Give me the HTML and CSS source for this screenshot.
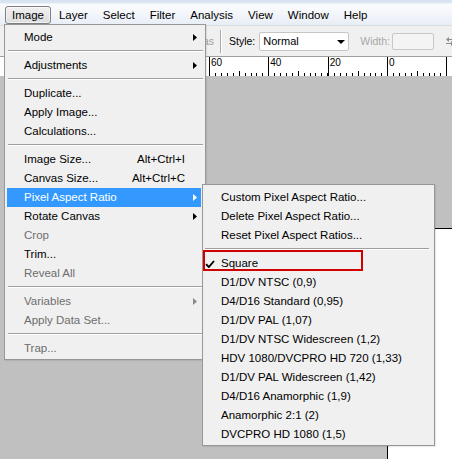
FILE: index.html
```html
<!DOCTYPE html>
<html>
<head>
<meta charset="utf-8">
<link rel="stylesheet" href="styles.css">
</head>
<body>
<div class="app">
  <div class="menubar">
    <span class="mb-item active">Image</span>
    <span class="mb-item">Layer</span>
    <span class="mb-item">Select</span>
    <span class="mb-item">Filter</span>
    <span class="mb-item">Analysis</span>
    <span class="mb-item">View</span>
    <span class="mb-item">Window</span>
    <span class="mb-item">Help</span>
  </div>
  <div class="toolbar">
    <div class="tb-left">Anti-alias</div>
    <div class="tb-sep"></div>
    <span class="tb-label">Style:</span>
    <div class="tb-select">Normal<svg class="dd" width="8" height="4" viewBox="0 0 8 4"><path d="M0 0H8L4 4Z" fill="#000"/></svg></div>
    <span class="tb-label dim">Width:</span>
    <div class="tb-input"></div>
    <svg class="tb-icon" width="8" height="9" viewBox="0 0 8 9"><path d="M0 2.5L3 0V5Z M8 6.5L5 4V9Z" fill="#8a8a8a"/><path d="M3 2.5H8M0 6.5H5" stroke="#8a8a8a"/></svg>
  </div>
  <div class="ruler">
    <div class="seg"></div>
    <div class="seg"></div>
    <div class="seg"></div>
    <div class="seg">60</div>
    <div class="seg">40</div>
    <div class="seg">20</div>
    <div class="seg">0</div>
    <div class="seg"></div>
  </div>
  <div class="workspace">
    <div class="canvas"></div>
  </div>

  <div class="menu main-menu">
    <div class="item"><span>Mode</span><svg class="arrow" width="4" height="7" viewBox="0 0 4 7"><path d="M0 0L4 3.5L0 7Z"/></svg></div>
    <div class="sep"></div>
    <div class="item"><span>Adjustments</span><svg class="arrow" width="4" height="7" viewBox="0 0 4 7"><path d="M0 0L4 3.5L0 7Z"/></svg></div>
    <div class="sep"></div>
    <div class="item"><span>Duplicate...</span></div>
    <div class="item"><span>Apply Image...</span></div>
    <div class="item"><span>Calculations...</span></div>
    <div class="sep"></div>
    <div class="item"><span>Image Size...</span><span class="sc">Alt+Ctrl+I</span></div>
    <div class="item"><span>Canvas Size...</span><span class="sc">Alt+Ctrl+C</span></div>
    <div class="item hl"><span>Pixel Aspect Ratio</span><svg class="arrow" width="4" height="7" viewBox="0 0 4 7"><path d="M0 0L4 3.5L0 7Z"/></svg></div>
    <div class="item"><span>Rotate Canvas</span><svg class="arrow" width="4" height="7" viewBox="0 0 4 7"><path d="M0 0L4 3.5L0 7Z"/></svg></div>
    <div class="item dis"><span>Crop</span></div>
    <div class="item"><span>Trim...</span></div>
    <div class="item dis"><span>Reveal All</span></div>
    <div class="sep"></div>
    <div class="item dis"><span>Variables</span><svg class="arrow" width="4" height="7" viewBox="0 0 4 7"><path d="M0 0L4 3.5L0 7Z"/></svg></div>
    <div class="item dis"><span>Apply Data Set...</span></div>
    <div class="sep"></div>
    <div class="item dis"><span>Trap...</span></div>
  </div>

  <div class="menu sub-menu">
    <div class="item"><span>Custom Pixel Aspect Ratio...</span></div>
    <div class="item"><span>Delete Pixel Aspect Ratio...</span></div>
    <div class="item"><span>Reset Pixel Aspect Ratios...</span></div>
    <div class="sep"></div>
    <div class="item checked"><svg class="check" width="10" height="8" viewBox="0 0 10 8"><path d="M1 4.2L3.8 7L9 1" fill="none" stroke="#000" stroke-width="1.9"/></svg><span>Square</span></div>
    <div class="item"><span>D1/DV NTSC (0,9)</span></div>
    <div class="item"><span>D4/D16 Standard (0,95)</span></div>
    <div class="item"><span>D1/DV PAL (1,07)</span></div>
    <div class="item"><span>D1/DV NTSC Widescreen (1,2)</span></div>
    <div class="item"><span>HDV 1080/DVCPRO HD 720 (1,33)</span></div>
    <div class="item"><span>D1/DV PAL Widescreen (1,42)</span></div>
    <div class="item"><span>D4/D16 Anamorphic (1,9)</span></div>
    <div class="item"><span>Anamorphic 2:1 (2)</span></div>
    <div class="item"><span>DVCPRO HD 1080 (1,5)</span></div>
    <div class="mark"></div>
  </div>
</div>
</body>
</html>
```

FILE: styles.css
```css
* { box-sizing: border-box; }
html, body { margin: 0; padding: 0; }
body {
  width: 452px;
  height: 459px;
  overflow: hidden;
  font-family: "Liberation Sans", Arial, sans-serif;
  font-size: 11.5px;
  color: #000;
  background: #c0c0c0;
}
.app {
  position: relative;
  width: 452px;
  height: 459px;
  display: flex;
  flex-direction: column;
}

/* menubar */
.menubar {
  height: 25px;
  flex: none;
  display: flex;
  align-items: flex-end;
  padding: 0 0 1px 5px;
  background: linear-gradient(#d5e2f2 0, #dce7f4 3px, #fbfcfe 4px, #f3f6fa 14px, #e8eef6 100%);
}
.mb-item {
  height: 18px;
  line-height: 17px;
  padding: 0 6px;
  margin-right: 1px;
  border: 1px solid transparent;
}
.mb-item.active {
  border-color: #7e7f80;
  border-radius: 3px;
  background: linear-gradient(#f0f0f0, #dedede);
  box-shadow: inset 0 0 0 1px rgba(255,255,255,0.6);
}

/* toolbar */
.toolbar {
  height: 32px;
  flex: none;
  display: flex;
  align-items: center;
  background: #f0f0f0;
  border-top: 1px solid #d8dde4;
  border-bottom: 1px solid #a0a0a0;
  font-size: 10.5px;
  overflow: hidden;
}
.tb-left {
  width: 214px;
  flex: none;
  text-align: right;
  white-space: nowrap;
  overflow: hidden;
  color: #a0a0a0;
}
.tb-sep {
  flex: none;
  width: 1px;
  height: 23px;
  background: #a8a8a8;
  margin-left: 6px;
  box-shadow: 1px 0 0 #fff;
}
.tb-label { margin-left: 8px; flex: none; }
.tb-label.dim { color: #a8a8a8; margin-left: 11px; }
.tb-select {
  flex: none;
  margin-left: 4px;
  width: 90px;
  height: 19px;
  background: #fff;
  border: 1px solid #c6c6c6;
  border-radius: 2px;
  padding-left: 3px;
  font-size: 11px;
  line-height: 17px;
  display: flex;
  align-items: center;
  justify-content: space-between;
  padding-right: 3px;
}
.dd { margin-top: 1px; }
.tb-input {
  flex: none;
  margin-left: 2px;
  width: 42px;
  height: 17px;
  background: #f4f4f4;
  border: 1px solid #c8c8c8;
  border-radius: 2px;
}
.tb-icon {
  flex: none;
  margin-left: 12px;
}

/* ruler */
.ruler {
  height: 19px;
  flex: none;
  display: flex;
  padding-left: 31px;
  background: #fff;
  overflow: hidden;
}
.seg {
  width: 59.33px;
  flex: none;
  height: 19px;
  border-left: 1px solid #000;
  padding-left: 1px;
  font-size: 10px;
  line-height: 11px;
  background:
    linear-gradient(#000, #000) 29px 100% / 1px 5px no-repeat,
    repeating-linear-gradient(to right, transparent 0 4.93px, #000 4.93px 5.93px) 0 100% / 100% 3px no-repeat;
}

/* workspace */
.workspace {
  flex: 1;
  padding: 152px 0 0 387px;
  display: flex;
  background: #c0c0c0;
}
.canvas {
  flex: 1;
  background: #fff;
  border-top: 1px solid #000;
  border-left: 1px solid #000;
}

/* menus */
.menu {
  position: absolute;
  background: #f0f0f0;
  border: 1px solid #979797;
  box-shadow: 1px 1px 1px rgba(0,0,0,0.08);
}
.main-menu {
  left: 4px;
  top: 24px;
  width: 202px;
  padding: 3px 4px 1px 2px;
}
.sub-menu {
  left: 202px;
  top: 184px;
  width: 233px;
  padding: 3px 4px 1px 2px;
}
.item {
  height: 19px;
  line-height: 19px;
  display: flex;
  align-items: center;
  justify-content: space-between;
  padding: 0 4px 0 17px;
  white-space: nowrap;
  position: relative;
}
.sub-menu .item { padding-left: 16px; justify-content: flex-start; }
.item .sc { padding-right: 12px; }
.arrow { fill: #000; }
.item.hl { background: #3399ff; color: #fff; }
.item.hl .arrow { fill: #fff; }
.item.dis { color: #6d6d6d; }
.item.dis .arrow { fill: #8a8a8a; }
.sep {
  height: 9px;
  position: relative;
  margin: 0 -2px 0 1px;
}
.sep::before {
  content: "";
  position: absolute;
  left: 0;
  right: 0;
  top: 3px;
  height: 1px;
  background: #a0a0a0;
  box-shadow: 0 1px 0 #fff;
}
.sub-menu .sep { margin: 0 1px 0 0; }
.check {
  position: absolute;
  left: 0;
  top: 6px;
}
.mark {
  position: absolute;
  left: 0;
  top: 65px;
  width: 160px;
  height: 21px;
  border: 2px solid #d00000;
}
```
